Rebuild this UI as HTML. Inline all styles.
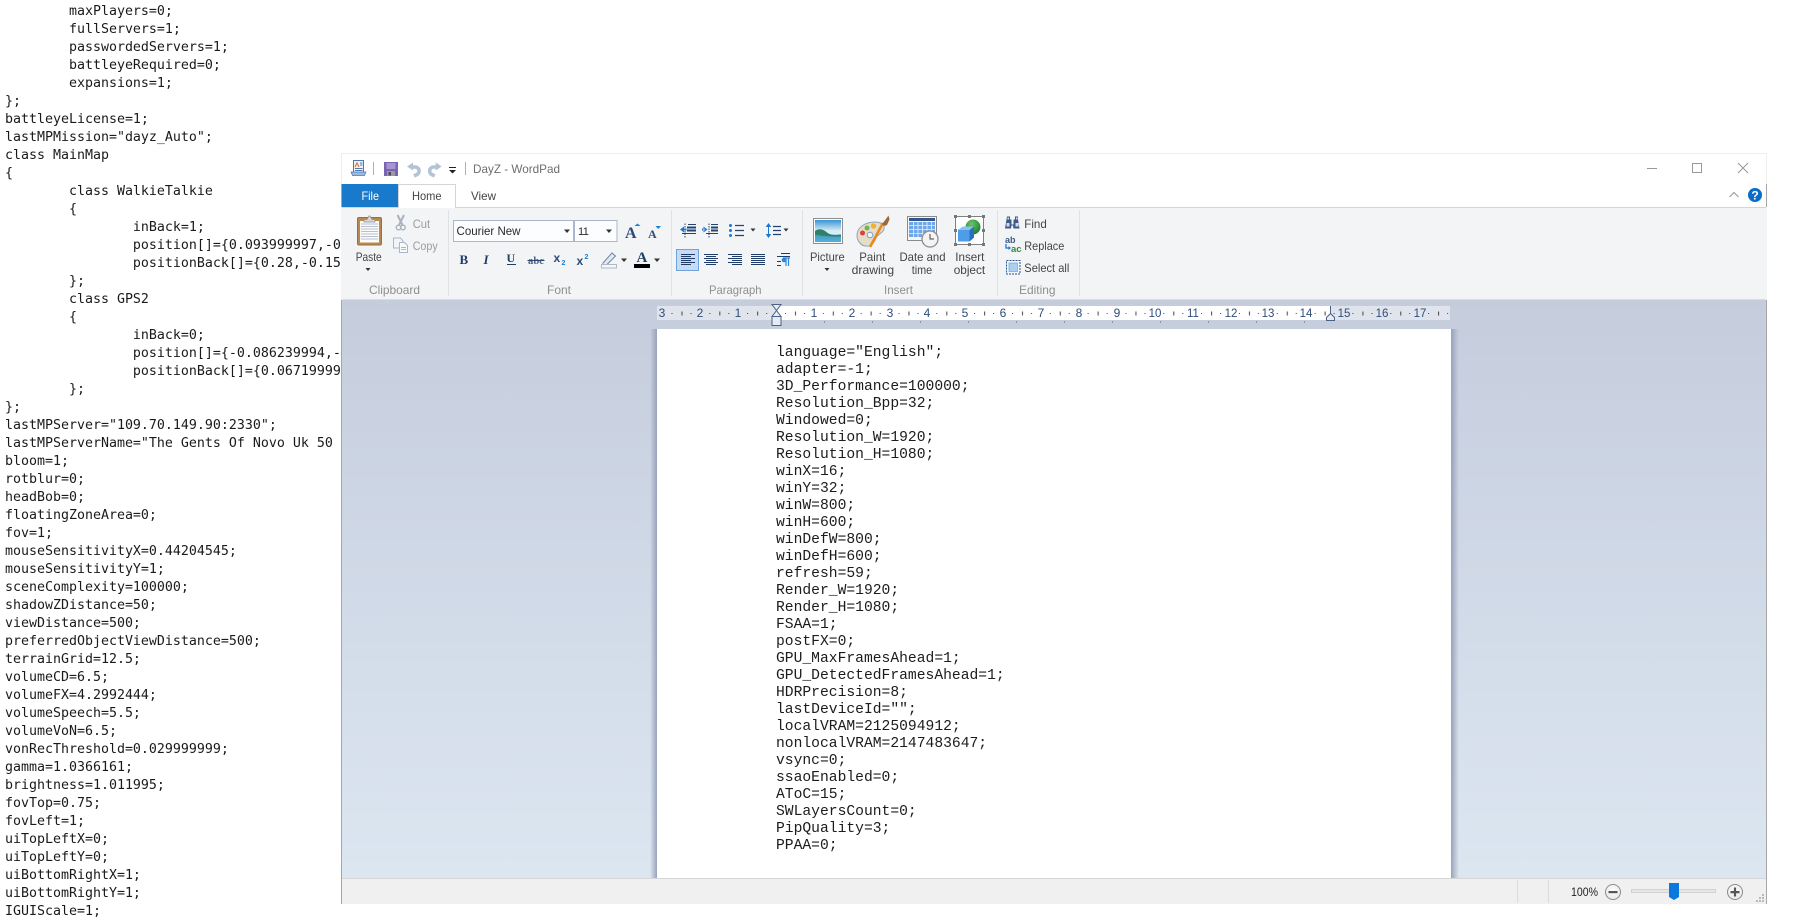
<!DOCTYPE html>
<html><head><meta charset="utf-8"><title>DayZ - WordPad</title>
<style>
html,body{margin:0;padding:0;width:1796px;height:917px;overflow:hidden;background:#fff}
#code{position:absolute;left:5px;top:2.5px;margin:0;font:13.29px/18px "DejaVu Sans Mono","Liberation Mono",monospace;color:#1a1a1a;white-space:pre}
#ui{position:absolute;left:0;top:0}
#doc{position:absolute;left:776px;top:345px;margin:0;font:14.67px/17px "Liberation Mono",monospace;color:#1c1c1c;white-space:pre}
svg text{font-family:"Liberation Sans",sans-serif;font-size:12px;fill:#444}
.g{fill:#8f8f8f}.d{fill:#9c9c9c}
.r{fill:#2f4d78;text-anchor:middle}
.tri{fill:#333}
</style></head><body>
<pre id="code">        maxPlayers=0;
        fullServers=1;
        passwordedServers=1;
        battleyeRequired=0;
        expansions=1;
};
battleyeLicense=1;
lastMPMission="dayz_Auto";
class MainMap
{
        class WalkieTalkie
        {
                inBack=1;
                position[]={0.093999997,-0
                positionBack[]={0.28,-0.15
        };
        class GPS2
        {
                inBack=0;
                position[]={-0.086239994,-
                positionBack[]={0.06719999
        };
};
lastMPServer="109.70.149.90:2330";
lastMPServerName="The Gents Of Novo Uk 50
bloom=1;
rotblur=0;
headBob=0;
floatingZoneArea=0;
fov=1;
mouseSensitivityX=0.44204545;
mouseSensitivityY=1;
sceneComplexity=100000;
shadowZDistance=50;
viewDistance=500;
preferredObjectViewDistance=500;
terrainGrid=12.5;
volumeCD=6.5;
volumeFX=4.2992444;
volumeSpeech=5.5;
volumeVoN=6.5;
vonRecThreshold=0.029999999;
gamma=1.0366161;
brightness=1.011995;
fovTop=0.75;
fovLeft=1;
uiTopLeftX=0;
uiTopLeftY=0;
uiBottomRightX=1;
uiBottomRightY=1;
IGUIScale=1;</pre>
<svg id="ui" width="1796" height="917" viewBox="0 0 1796 917" xmlns="http://www.w3.org/2000/svg">
<defs>
<linearGradient id="ws" x1="0" y1="0" x2="0" y2="1"><stop offset="0" stop-color="#c5cddd"/><stop offset="1" stop-color="#dce6f1"/></linearGradient>
<linearGradient id="shl" x1="0" y1="0" x2="1" y2="0"><stop offset="0" stop-color="#97a3bb" stop-opacity="0"/><stop offset="1" stop-color="#97a3bb"/></linearGradient>
<linearGradient id="shr" x1="0" y1="0" x2="1" y2="0"><stop offset="0" stop-color="#97a3bb"/><stop offset="1" stop-color="#97a3bb" stop-opacity="0"/></linearGradient>
<linearGradient id="sky" x1="0" y1="0" x2="0" y2="1"><stop offset="0" stop-color="#3a94d6"/><stop offset=".5" stop-color="#d8eef6"/><stop offset="1" stop-color="#d8eef6"/></linearGradient>
<linearGradient id="water" x1="0" y1="0" x2="0" y2="1"><stop offset="0" stop-color="#3b8f96"/><stop offset="1" stop-color="#54b0e2"/></linearGradient>
<radialGradient id="sph" cx=".4" cy=".3" r=".8"><stop offset="0" stop-color="#6cc46a"/><stop offset="1" stop-color="#0f7a26"/></radialGradient>
<radialGradient id="btn" cx=".5" cy=".4" r=".7"><stop offset="0" stop-color="#ffffff"/><stop offset="1" stop-color="#e4e4e4"/></radialGradient>
<pattern id="tk" patternUnits="userSpaceOnUse" x="662.5" y="306" width="37.83" height="14">
<rect x="9" y="7" width="1" height="1" fill="#444"/><rect x="19" y="5.5" width="1" height="4" fill="#444"/><rect x="28" y="7" width="1" height="1" fill="#444"/>
</pattern>
<pattern id="tab" patternUnits="userSpaceOnUse" x="824" y="321" width="48" height="3"><rect width="1" height="2" fill="#8a93a6"/></pattern>
</defs>

<!-- window frame -->
<rect x="341" y="153" width="1426" height="751" fill="#fff"/>
<path d="M341.5 153.5H1766.5" stroke="#eeeeee" fill="none"/>
<path d="M341.5 153.5V184M1766.5 153.5V184" stroke="#eeeeee" fill="none"/>
<rect x="341" y="184" width="1" height="720" fill="#a6a6a6"/>
<rect x="1766" y="184" width="1" height="720" fill="#a6a6a6"/>

<!-- quick access -->
<g>
<path d="M353.500 160.500h10v12h-10z" fill="#eef3fb" stroke="#4c78b4"/>
<path d="M351 172h15l-1.500 3.500h-12z" fill="#9db9dd" stroke="#4c78b4" stroke-width=".7"/>
<path d="M355 167l2-4 2 4" fill="none" stroke="#e8762a" stroke-width="1.200"/>
<path d="M360 163h2.500M360 165h2.500M355 168.500h7.500M355 170.500h7.500" stroke="#4c78b4" stroke-width="1"/>
<rect x="373" y="162" width="1" height="13" fill="#b0b0b0"/>
<rect x="384" y="162" width="14" height="14" fill="#7b63b3"/>
<rect x="386.500" y="163" width="9" height="6" fill="#a596d2"/>
<rect x="387" y="171" width="8" height="5" fill="#9c98a4"/>
<rect x="388.500" y="172" width="2.500" height="3.500" fill="#4e4860"/>
<path d="M412 167h3a4 4 0 0 1 2 7.500l-3 1.500" fill="none" stroke="#b3c2d6" stroke-width="3.600"/>
<path d="M407 166.500l6-4v8z" fill="#b3c2d6"/>
<path d="M436.700 167h-3a4 4 0 0 0-2 7.500l3 1.500" fill="none" stroke="#b3c2d6" stroke-width="3.600"/>
<path d="M441.700 166.500l-6-4v8z" fill="#b3c2d6"/>
<rect x="449" y="167" width="7" height="1" fill="#222"/>
<path d="M449 170h7l-3.500 3.500z" fill="#222"/>
<rect x="465" y="162" width="1" height="13" fill="#b0b0b0"/>
<text x="473" y="173" textLength="87" lengthAdjust="spacingAndGlyphs" style="fill:#6e6e6e">DayZ - WordPad</text>
</g>

<!-- window controls -->
<rect x="1647" y="168" width="10" height="1" fill="#999"/>
<rect x="1692.500" y="163.500" width="9" height="9" fill="none" stroke="#999"/>
<path d="M1738 163l10 10M1748 163l-10 10" stroke="#999" fill="none"/>
<path d="M1729.500 197l4.500-4.500 4.500 4.500" fill="none" stroke="#a0a0a0" stroke-width="1.200"/>
<circle cx="1755" cy="195" r="7" fill="#0a6cc8"/>
<text x="1755" y="199.500" text-anchor="middle" style="fill:#fff;font-weight:bold;font-size:12px">?</text>

<!-- tabs -->
<rect x="342" y="184" width="56" height="24" fill="#1979ca"/>
<text x="361.500" y="200" textLength="17.500" lengthAdjust="spacingAndGlyphs" style="fill:#fff">File</text>
<rect x="341" y="207" width="1426" height="93" fill="#f3f4f6"/>
<rect x="342" y="207" width="1424" height="1" fill="#d5d5d5"/>
<rect x="398" y="184" width="58" height="24" fill="#fff"/>
<path d="M398.500 208V184.500H455.500V208" fill="none" stroke="#d5d5d5"/>
<text x="412" y="200" textLength="29.500" lengthAdjust="spacingAndGlyphs">Home</text>
<text x="471" y="200" textLength="25" lengthAdjust="spacingAndGlyphs">View</text>
<rect x="342" y="299" width="1424" height="1" fill="#dcdcdc"/>

<!-- group separators -->
<path d="M448.500 210V296M671.500 210V296M802.500 210V296M997.500 210V296M1079.500 210V296" stroke="#dfe1e4" fill="none"/>
<text class="g" x="369" y="294" textLength="51" lengthAdjust="spacingAndGlyphs">Clipboard</text>
<text class="g" x="547" y="294" textLength="24" lengthAdjust="spacingAndGlyphs">Font</text>
<text class="g" x="709" y="294" textLength="52.500" lengthAdjust="spacingAndGlyphs">Paragraph</text>
<text class="g" x="884" y="294" textLength="29" lengthAdjust="spacingAndGlyphs">Insert</text>
<text class="g" x="1019" y="294" textLength="36.500" lengthAdjust="spacingAndGlyphs">Editing</text>

<!-- clipboard group -->
<rect x="357.500" y="217.500" width="24" height="27.500" rx="1.500" fill="#b88a52" stroke="#9a6f3e"/>
<rect x="360" y="221" width="19" height="21.500" fill="#fbfbfb"/>
<path d="M361 224h17M361 226.500h17M361 229h17M361 231.500h17M361 234h17M361 236.500h17M361 239h17" stroke="#b8c0cc" stroke-width="1"/>
<path d="M364 219.500h3l2-3.500h1l2 3.500h3v2.500h-11z" fill="#d8d8d8" stroke="#8c8c8c" stroke-width=".7"/>
<text x="355.700" y="261" textLength="26" lengthAdjust="spacingAndGlyphs">Paste</text>
<path d="M365.500 268h5l-2.500 3z" class="tri"/>
<path d="M397.500 215l5 10M404 215l-5 10" stroke="#a9b2bf" stroke-width="2" fill="none"/>
<circle cx="398.500" cy="227.500" r="2.300" fill="none" stroke="#a9b2bf" stroke-width="1.400"/>
<circle cx="403" cy="227.500" r="2.300" fill="none" stroke="#a9b2bf" stroke-width="1.400"/>
<text class="d" x="412.700" y="228" textLength="17.500" lengthAdjust="spacingAndGlyphs">Cut</text>
<path d="M393.500 238h7l2.500 3v7h-9.500z" fill="#f1f4f8" stroke="#aab6c6"/>
<path d="M399.500 242.500h5l3 3v7h-8z" fill="#f8fafc" stroke="#aab6c6"/>
<path d="M401 247.500h5M401 249.500h5" stroke="#aab6c6"/>
<text class="d" x="412.700" y="250" textLength="25" lengthAdjust="spacingAndGlyphs">Copy</text>

<!-- font group -->
<rect x="453.500" y="220.500" width="120" height="21" fill="#fcfdfe" stroke="#abb6cc"/>
<rect x="574.500" y="220.500" width="42.500" height="21" fill="#fcfdfe" stroke="#abb6cc"/>
<text x="456.500" y="235" textLength="64" lengthAdjust="spacingAndGlyphs" style="fill:#2a2a2a">Courier New</text>
<text x="578" y="235" style="fill:#2a2a2a;font-size:11px;letter-spacing:-.5px">11</text>
<path d="M564 229.500h6l-3 3.500zM606 229.500h6l-3 3.500z" class="tri"/>
<text x="625" y="238" style="font:bold 16px 'Liberation Serif',serif;fill:#2c4a78">A</text>
<path d="M634.500 226h6l-3-2.500z" fill="#1d7fd6"/>
<text x="648" y="238" style="font:bold 12px 'Liberation Serif',serif;fill:#2c4a78">A</text>
<path d="M655.500 226h5.500l-2.750 3z" fill="#1d7fd6"/>
<text x="459.500" y="264" style="font:bold 13px 'Liberation Serif',serif;fill:#1f3d68">B</text>
<text x="483.500" y="264" style="font:italic bold 13px 'Liberation Serif',serif;fill:#1f3d68">I</text>
<text x="506.500" y="262" style="font:bold 12px 'Liberation Serif',serif;fill:#1f3d68">U</text>
<rect x="507" y="264" width="9" height="1" fill="#1f3d68"/>
<text x="528" y="264" textLength="16" lengthAdjust="spacingAndGlyphs" style="font:bold 11px 'Liberation Serif',serif;fill:#4a5f80">abc</text>
<rect x="527.500" y="260" width="17" height="1" fill="#2e4a74"/>
<text x="553.500" y="262" style="font:bold 12px 'Liberation Sans',sans-serif;fill:#2c4a78">x</text>
<text x="561.500" y="265" style="font:bold 7px 'Liberation Sans',sans-serif;fill:#1d7fd6">2</text>
<text x="576.500" y="265" style="font:bold 12px 'Liberation Sans',sans-serif;fill:#2c4a78">x</text>
<text x="584.500" y="259" style="font:bold 7px 'Liberation Sans',sans-serif;fill:#1d7fd6">2</text>
<path d="M603 263l9-10 3.500 3-9.500 9.500h-3z" fill="#dfe9f5" stroke="#6f86a8"/>
<path d="M603 263l-.5 2.500h3z" fill="#e5b34a"/>
<rect x="601.500" y="264.500" width="15" height="3.500" fill="#f6f7f9" stroke="#b0b8c4"/>
<path d="M621 258.500h6l-3 3.500z" class="tri"/>
<text x="636.500" y="262" style="font:bold 15px 'Liberation Serif',serif;fill:#1f3d68">A</text>
<rect x="634" y="264" width="16" height="4" fill="#000"/>
<path d="M654 258.500h6l-3 3.500z" class="tri"/>

<!-- paragraph group -->
<g stroke="#26436f" fill="none" stroke-width="1.400">
<path d="M685 223.500v14" stroke-dasharray="1.500 1" stroke-width="1"/>
<path d="M688 224.500h8M682 233.500h14" stroke-width="1"/>
<path d="M687 227.500h9M687 230.500h9" stroke-width="2"/>
<path d="M709 223.500v14" stroke-dasharray="1.500 1" stroke-width="1"/>
<path d="M711 224.500h7M706 233.500h12" stroke-width="1"/>
<path d="M711 227.500h7M711 230.500h7" stroke-width="2"/>
<path d="M735 225.500h9M735 230.500h9M735 235.500h9" stroke-width="1.200"/>
<path d="M773 226.500h8M773 230.500h8M773 234.500h8" stroke-width="1.200"/>
</g>
<path d="M680 229.500l4-3v6zM684 228.500h2.500v2h-2.500z" fill="#1c77d2"/>
<path d="M707.500 229.500l-4-3v6zM702 228.500h2.500v2h-2.500z" fill="#1c77d2"/>
<circle cx="730.500" cy="225.500" r="1.500" fill="#1c77d2"/><circle cx="730.500" cy="230.500" r="1.500" fill="#1c77d2"/><circle cx="730.500" cy="235.500" r="1.500" fill="#1c77d2"/>
<path d="M750.500 228.500h5l-2.500 3zM783.500 228.500h5l-2.500 3z" class="tri"/>
<path d="M768.500 223l-2.800 4h5.600zM768.500 238l-2.800-4h5.600z" fill="#1c77d2"/>
<rect x="768" y="226" width="1" height="9" fill="#1c77d2"/>
<rect x="676.500" y="249.500" width="22" height="21" fill="#c5dcf4" stroke="#6da4e0"/>
<g stroke="#1f3d68" stroke-width="1" fill="none">
<path d="M681 254.500h14M681 256.500h10M681 258.500h14M681 260.500h10M681 262.500h14M681 264.500h10"/>
<path d="M704 254.500h14M706 256.500h10M704 258.500h14M706 260.500h10M704 262.500h14M706 264.500h10"/>
<path d="M728 254.500h14M732 256.500h10M728 258.500h14M732 260.500h10M728 262.500h14M732 264.500h10"/>
<path d="M751 254.500h14M751 256.500h14M751 258.500h14M751 260.500h14M751 262.500h14M751 264.500h14"/>
<path d="M781 253.500h9M777 256.500h13M777 261.500h4M777 265.500h4"/>
</g>
<path d="M783 258h7M786 258v8M788.500 258v8" stroke="#2b86de" fill="none" stroke-width="1.200"/>
<circle cx="784" cy="260" r="2.300" fill="#2b86de"/>

<!-- insert group -->
<rect x="813.500" y="218.500" width="29" height="25" fill="#fff" stroke="#8f8f8f"/>
<rect x="815" y="220" width="26" height="22" fill="url(#sky)"/>
<path d="M815 231c5-3 9-1 12 1.500s8 2.500 14 2V242h-26z" fill="url(#water)"/>
<path d="M815 231c4-3 8-2 12 1.500s8 2.500 14 2v2c-8 0-18 0-26-2z" fill="#2f7f6a"/>
<path d="M857 235c0-8 9-13 18-13 6 0 10 3 9 7-1 4-6 5-8 9-2 5-5 9-10 8-5 0-9-5-9-11z" fill="#e6dcc8" stroke="#8fa2bb"/>
<circle cx="862.500" cy="233" r="2.500" fill="#d9443a"/>
<circle cx="867" cy="228" r="2.500" fill="#6db848"/>
<circle cx="873.500" cy="226" r="2.700" fill="#e8b530"/>
<circle cx="870" cy="235" r="2.800" fill="#f2f5fa" stroke="#7fa0c8"/>
<path d="M870 247l13-24" stroke="#e88b1f" stroke-width="2.600" fill="none"/>
<path d="M882 224l2.500-3 4-5.500 1 4-2.500 5.500-2.500 1z" fill="#9a6a3e"/>
<rect x="907.500" y="216.500" width="29" height="24" fill="#f4f6f8" stroke="#8a8a8a"/>
<rect x="909" y="218" width="26" height="3" fill="#34548c"/>
<rect x="909" y="222" width="26" height="15" fill="#6fa8ea"/>
<path d="M909 225.500h26M909 229.500h26M909 233.500h26M913.500 222v15M918 222v15M922.500 222v15M927 222v15M931.500 222v15" stroke="#e6f0fb" stroke-width=".8"/>
<circle cx="930" cy="239" r="8" fill="#f4f4f4" stroke="#8c8c8c" stroke-width="1.300"/>
<path d="M930 234v5h4" stroke="#444" fill="none"/>
<rect x="955.500" y="216.500" width="28" height="28" fill="#fff" stroke="#808080"/>
<path d="M954 215h3v3h-3zM968 215h3v3h-3zM982 215h3v3h-3zM954 229h3v3h-3zM982 229h3v3h-3zM954 243h3v3h-3zM968 243h3v3h-3zM982 243h3v3h-3z" fill="#777"/>
<circle cx="973" cy="227" r="7.500" fill="url(#sph)"/>
<path d="M958 230l5-3.500h11v11l-4.500 4h-11.500z" fill="#4f9ce8"/>
<path d="M969.500 230l4.500-3.500v11l-4.500 4z" fill="#2b6fbe"/>
<path d="M958 230l5-3.500h11l-4.500 3.500z" fill="#8cc0f2"/>
<text x="810" y="261" textLength="34.700" lengthAdjust="spacingAndGlyphs">Picture</text>
<path d="M824.500 268h5l-2.500 3z" class="tri"/>
<text x="859.300" y="261" textLength="26" lengthAdjust="spacingAndGlyphs">Paint</text>
<text x="851.700" y="274" textLength="42.500" lengthAdjust="spacingAndGlyphs">drawing</text>
<text x="899.500" y="261" textLength="46" lengthAdjust="spacingAndGlyphs">Date and</text>
<text x="911.700" y="274" textLength="20.500" lengthAdjust="spacingAndGlyphs">time</text>
<text x="955.300" y="261" textLength="29" lengthAdjust="spacingAndGlyphs">Insert</text>
<text x="953.700" y="274" textLength="31.500" lengthAdjust="spacingAndGlyphs">object</text>

<!-- editing -->
<path d="M1007 216.500h3v3h1.500v5h2v-5h1.500v-3h3v3l1.500 9h-6l-.5-3h-1.500l-.5 3h-6l1.500-9z" fill="#3e5a86"/>
<path d="M1006.500 223h3v3.500h-3zM1015.500 223h3v3.500h-3zM1007.500 217.500h1.500v2h-1.500zM1016 217.500h1.500v2h-1.500z" fill="#cfdcee"/>
<text x="1024.300" y="228" textLength="22.500" lengthAdjust="spacingAndGlyphs">Find</text>
<text x="1005" y="243" style="font:bold 9px 'Liberation Sans',sans-serif;fill:#3e5a86">ab</text>
<text x="1011" y="252" style="font:bold 9.500px 'Liberation Sans',sans-serif;fill:#2f8a3a">ac</text>
<path d="M1006 244v4h3" fill="none" stroke="#1c77d2" stroke-width="1.300"/>
<path d="M1008.500 246v4l2.500-2z" fill="#1c77d2"/>
<text x="1024.300" y="250" textLength="40" lengthAdjust="spacingAndGlyphs">Replace</text>
<rect x="1006.500" y="260.500" width="13.500" height="13.500" fill="none" stroke="#26558f" stroke-dasharray="2 1"/>
<rect x="1009" y="263" width="8.500" height="8.500" fill="#a9d0f3" stroke="#5f9ad8" stroke-width=".6"/>
<text x="1024.300" y="272" textLength="45" lengthAdjust="spacingAndGlyphs">Select all</text>

<!-- workspace -->
<rect x="342" y="300" width="1424" height="578" fill="url(#ws)"/>
<rect x="650" y="329" width="7" height="549" fill="url(#shl)"/>
<rect x="1451" y="329" width="8" height="549" fill="url(#shr)"/>
<rect x="657" y="329" width="794" height="549" fill="#fff"/>

<!-- ruler -->
<rect x="657" y="306" width="793" height="14" fill="#e0e4ed"/>
<rect x="776" y="306" width="554" height="14" fill="#fff"/>
<rect x="657" y="306" width="793" height="14" fill="url(#tk)"/>
<rect x="824" y="321" width="481" height="2" fill="url(#tab)"/>
<g>
<rect x="657" y="306" width="11" height="14" fill="#e0e4ed"/><rect x="694" y="306" width="12" height="14" fill="#e0e4ed"/><rect x="732" y="306" width="12" height="14" fill="#e0e4ed"/>
<rect x="808" y="306" width="12" height="14" fill="#fff"/><rect x="846" y="306" width="12" height="14" fill="#fff"/><rect x="884" y="306" width="12" height="14" fill="#fff"/><rect x="922" y="306" width="12" height="14" fill="#fff"/><rect x="959" y="306" width="12" height="14" fill="#fff"/><rect x="997" y="306" width="12" height="14" fill="#fff"/><rect x="1035" y="306" width="12" height="14" fill="#fff"/><rect x="1073" y="306" width="12" height="14" fill="#fff"/><rect x="1111" y="306" width="12" height="14" fill="#fff"/><rect x="1147" y="306" width="15" height="14" fill="#fff"/><rect x="1185" y="306" width="15" height="14" fill="#fff"/><rect x="1223" y="306" width="15" height="14" fill="#fff"/><rect x="1261" y="306" width="15" height="14" fill="#fff"/><rect x="1299" y="306" width="15" height="14" fill="#fff"/>
<rect x="1336" y="306" width="15" height="14" fill="#e0e4ed"/><rect x="1374" y="306" width="15" height="14" fill="#e0e4ed"/><rect x="1412" y="306" width="15" height="14" fill="#e0e4ed"/>
</g>
<text class="r" x="662" y="317">3</text><text class="r" x="700" y="317">2</text><text class="r" x="738" y="317">1</text>
<text class="r" x="814" y="317">1</text><text class="r" x="852" y="317">2</text><text class="r" x="890" y="317">3</text><text class="r" x="927" y="317">4</text><text class="r" x="965" y="317">5</text><text class="r" x="1003" y="317">6</text><text class="r" x="1041" y="317">7</text><text class="r" x="1079" y="317">8</text><text class="r" x="1117" y="317">9</text><text class="r" x="1155" y="317" style="font-size:11.500px">10</text><text class="r" x="1193" y="317" style="font-size:11.500px">11</text><text class="r" x="1231" y="317" style="font-size:11.500px">12</text><text class="r" x="1268" y="317" style="font-size:11.500px">13</text><text class="r" x="1306" y="317" style="font-size:11.500px">14</text><text class="r" x="1344" y="317" style="font-size:11.500px">15</text><text class="r" x="1382" y="317" style="font-size:11.500px">16</text><text class="r" x="1420" y="317" style="font-size:11.500px">17</text>
<path d="M772 304.500h9l-4.500 6 4.500 6h-9l4.500-6z" fill="#e7ecf4" stroke="#4a6285"/>
<rect x="772" y="316.500" width="9" height="9" fill="#e7ecf4" stroke="#4a6285"/>
<rect x="1330" y="306" width="1" height="8" fill="#4a6285"/>
<path d="M1326.500 320.500v-3l4-4 4 4v3z" fill="#e7ecf4" stroke="#4a6285"/>

<!-- status bar -->
<rect x="342" y="878" width="1424" height="26" fill="#f0f0f0"/>
<rect x="342" y="878" width="1424" height="1" fill="#d6d6d6"/>
<rect x="1517" y="880" width="1" height="23" fill="#dcdcdc"/>
<rect x="1548" y="880" width="1" height="23" fill="#dcdcdc"/>
<text x="1571" y="896" textLength="27" lengthAdjust="spacingAndGlyphs" style="fill:#222">100%</text>
<circle cx="1613" cy="892" r="7.500" fill="url(#btn)" stroke="#8c8c8c"/>
<rect x="1608.500" y="891" width="9" height="2.200" fill="#555"/>
<rect x="1631.500" y="889.500" width="84" height="3" fill="#e6e6e6" stroke="#d2d2d2"/>
<path d="M1669 883h10v14l-5 3-5-3z" fill="#0a78dc"/>
<circle cx="1735" cy="892" r="7.500" fill="url(#btn)" stroke="#8c8c8c"/>
<path d="M1730.500 891h9v2.200h-9zM1733.900 887.500h2.200v9h-2.200z" fill="#555"/>
<path d="M1762 894h2v2h-2zM1759 897h2v2h-2zM1762 897h2v2h-2zM1756 900h2v2h-2zM1759 900h2v2h-2zM1762 900h2v2h-2z" fill="#b8b8b8"/>
</svg>
<pre id="doc">language="English";
adapter=-1;
3D_Performance=100000;
Resolution_Bpp=32;
Windowed=0;
Resolution_W=1920;
Resolution_H=1080;
winX=16;
winY=32;
winW=800;
winH=600;
winDefW=800;
winDefH=600;
refresh=59;
Render_W=1920;
Render_H=1080;
FSAA=1;
postFX=0;
GPU_MaxFramesAhead=1;
GPU_DetectedFramesAhead=1;
HDRPrecision=8;
lastDeviceId="";
localVRAM=2125094912;
nonlocalVRAM=2147483647;
vsync=0;
ssaoEnabled=0;
AToC=15;
SWLayersCount=0;
PipQuality=3;
PPAA=0;</pre>
</body></html>
